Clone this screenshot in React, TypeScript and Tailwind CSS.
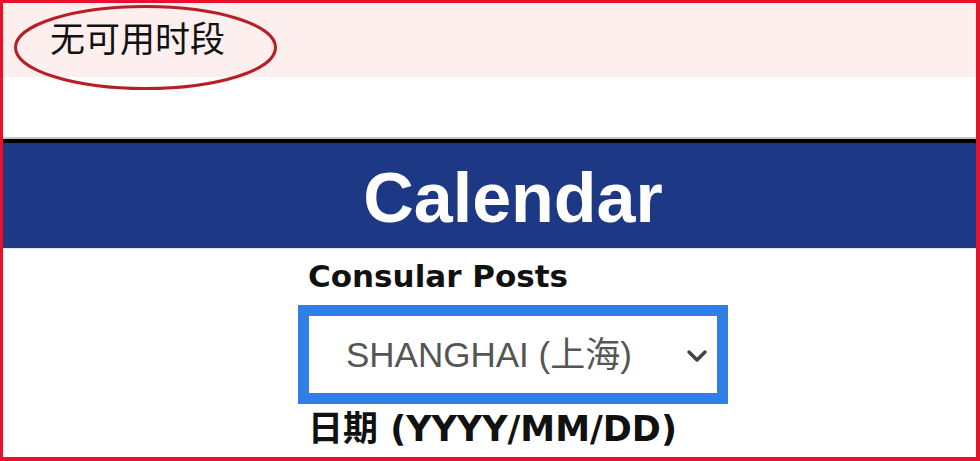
import React from "react";

export default function App() {
  return (
    <div className="relative w-[980px] h-[461px] overflow-hidden bg-white border-l-[3px] border-t-[3px] border-r-[4px] border-b-[4px] border-[#ea0f2a] flex flex-col">
      <div className="h-[74px] shrink-0 bg-[#fcefee] flex items-center pl-[47px] pb-[8px]">
        <span
          className="text-[35px] leading-none text-[#111]"
          style={{ fontFamily: '"Noto Sans CJK SC", "Noto Sans", sans-serif' }}
        >
          无可用时段
        </span>
      </div>
      <svg
        className="absolute left-[10px] top-[1px] pointer-events-none"
        width="265"
        height="87"
        viewBox="0 0 265 87"
      >
        <ellipse cx="132.5" cy="43.5" rx="130" ry="41" fill="none" stroke="#b61f25" strokeWidth="3" />
      </svg>
      <div className="h-[60px] shrink-0" />
      <div className="h-[2px] shrink-0 bg-[#c6c6c6]" />
      <div className="h-[4px] shrink-0 bg-black" />
      <div className="h-[105px] shrink-0 bg-[#1d3884] flex justify-center pl-[47px] pt-[20px]">
        <span
          className="text-[70px] leading-[70px] font-bold text-white"
          style={{ fontFamily: '"Liberation Sans", Arial, sans-serif' }}
        >
          Calendar
        </span>
      </div>
      <div className="h-px shrink-0 bg-[#dde8ec]" />
      <div className="flex flex-col items-start pl-[305px]">
        <div
          className="mt-[9px] text-[31px] leading-[36px] font-bold text-[#111]"
          style={{ fontFamily: '"DejaVu Sans", Verdana, sans-serif' }}
        >
          Consular Posts
        </div>
        <div className="mt-[11px] -ml-[10px] w-[430px] h-[99px] border-[11px] border-[#2f7fe6] bg-white flex items-center justify-between pl-[37px] pr-[9px]">
          <span
            className="text-[35px] leading-none text-[#555]"
            style={{ fontFamily: '"Liberation Sans", Arial, "Noto Sans CJK SC", sans-serif' }}
          >
            SHANGHAI (上海)
          </span>
          <svg width="22" height="14" viewBox="0 0 22 14" className="mt-[2px]">
            <path d="M3 3 L11 11 L19 3" fill="none" stroke="#444" strokeWidth="3.5" strokeLinecap="round" strokeLinejoin="round" />
          </svg>
        </div>
        <div
          className="mt-[5px] text-[35px] leading-[40px] font-bold text-[#111]"
          style={{ fontFamily: '"DejaVu Sans", Verdana, "Noto Sans CJK SC", sans-serif' }}
        >
          日期 (YYYY/MM/DD)
        </div>
      </div>
    </div>
  );
}
